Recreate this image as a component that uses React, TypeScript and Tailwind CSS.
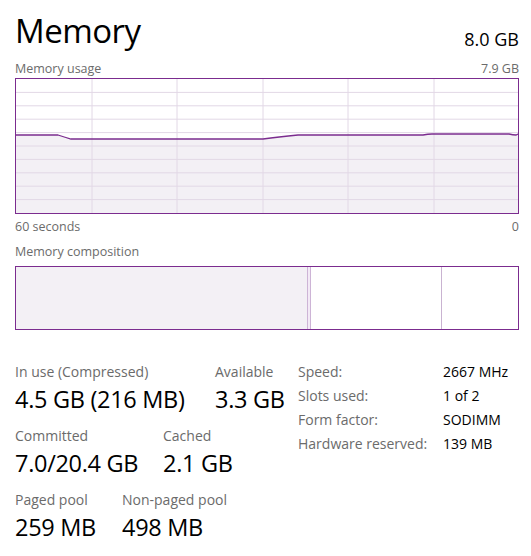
import React from 'react';

const font = { fontFamily: '"Open Sans", "Noto Sans", sans-serif' };

const hLines = [1, 2, 3, 4, 5, 6, 7, 8, 9].map((i) => (i * 134) / 10);
const vLines = [76, 161, 247, 332, 418];

const linePath =
  'M0 56 L42 56 Q48 58 55 60 L247 60 Q262 58 282 56 L407 56 Q412 55 416 55 L493 55 Q497 56 500 56 L502 55';

const UsageGraph: React.FC = () => (
  <div className="h-[136px] border border-[#7b2c8f] bg-white">
    <svg className="block w-full h-full" viewBox="0 0 502 134" preserveAspectRatio="none">
      <path d={`${linePath} L502 134 L0 134 Z`} fill="#f3f0f5" />
      {hLines.map((y) => (
        <line key={y} x1="0" x2="502" y1={y} y2={y} stroke="#e2d8e6" strokeWidth="1" />
      ))}
      {vLines.map((x) => (
        <line key={x} x1={x} x2={x} y1="0" y2="134" stroke="#e2d8e6" strokeWidth="1" />
      ))}
      <path d={linePath} fill="none" stroke="#7b2c8f" strokeWidth="1.3" />
    </svg>
  </div>
);

const Stat: React.FC<{ label: string; value: string; className?: string }> = ({ label, value, className }) => (
  <div className={className}>
    <div className="text-[14px] leading-[22px] text-[#6b6b6b]">{label}</div>
    <div className="text-[23.5px] leading-[32px] text-black tracking-[-0.3px]">{value}</div>
  </div>
);

const App: React.FC = () => {
  return (
    <div className="w-[531px] h-[556px] bg-white pl-[15px] pr-[12px] overflow-hidden" style={font}>
      <div className="flex justify-between items-end pt-[7px]">
        <div className="text-[33px] leading-[48px] text-black tracking-[-0.5px]">Memory</div>
        <div className="text-[18px] leading-[24px] text-black pb-[4px]">8.0 GB</div>
      </div>
      <div className="flex justify-between text-[12.5px] leading-[18px] text-[#6b6b6b] mt-[5px]">
        <span>Memory usage</span>
        <span>7.9 GB</span>
      </div>
      <UsageGraph />
      <div className="flex justify-between text-[12.5px] leading-[18px] text-[#6b6b6b] mt-[4px]">
        <span>60 seconds</span>
        <span>0</span>
      </div>
      <div className="text-[12.5px] leading-[18px] text-[#6b6b6b] mt-[7px]">Memory composition</div>
      <div className="mt-[5px] h-[64px] border border-[#7b2c8f] flex">
        <div className="w-[291px] bg-[#f3f0f5]" />
        <div className="w-[4px] bg-[#f3eaf6] border-x border-[#cdb4d6]" />
        <div className="w-[131px] border-r border-[#c9b3d1]" />
        <div className="flex-1" />
      </div>
      <div className="flex items-start mt-[31px]">
        <div className="w-[283px] flex flex-col gap-[10px]">
          <div className="flex">
            <Stat label="In use (Compressed)" value="4.5 GB (216 MB)" className="w-[200px]" />
            <Stat label="Available" value="3.3 GB" />
          </div>
          <div className="flex">
            <Stat label="Committed" value="7.0/20.4 GB" className="w-[148px]" />
            <Stat label="Cached" value="2.1 GB" />
          </div>
          <div className="flex">
            <Stat label="Paged pool" value="259 MB" className="w-[107px]" />
            <Stat label="Non-paged pool" value="498 MB" />
          </div>
        </div>
        <div className="grid grid-cols-[145px_1fr] auto-rows-[24px] text-[14px] leading-[22px]">
          <span className="text-[#6b6b6b]">Speed:</span>
          <span className="text-black">2667 MHz</span>
          <span className="text-[#6b6b6b]">Slots used:</span>
          <span className="text-black">1 of 2</span>
          <span className="text-[#6b6b6b]">Form factor:</span>
          <span className="text-black">SODIMM</span>
          <span className="text-[#6b6b6b]">Hardware reserved:</span>
          <span className="text-black">139 MB</span>
        </div>
      </div>
    </div>
  );
};

export default App;
